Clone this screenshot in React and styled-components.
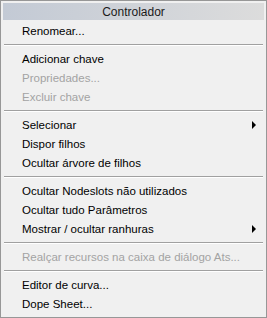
import React from "react";
import styled, { createGlobalStyle } from "styled-components";

const Global = createGlobalStyle`
  html, body { margin: 0; padding: 0; background: #f0f0f0; }
  body { font-family: "Liberation Sans", Arial, sans-serif; }
`;

const Menu = styled.div`
  box-sizing: border-box;
  width: 267px;
  height: 318px;
  border: 1px solid #979797;
  background: #f0f0f0;
  padding: 2px 2px 4px 2px;
  display: flex;
  flex-direction: column;
  font-size: 11.5px;
`;

const Header = styled.div`
  height: 17px;
  margin-bottom: 1px;
  background: linear-gradient(to right, #c3cad5, #dcdcdc);
  color: #1a1a1a;
  display: flex;
  align-items: center;
  justify-content: center;
  font-size: 12px;
`;

const Item = styled.div`
  height: 19px;
  display: flex;
  align-items: center;
  justify-content: space-between;
  padding: 1px 8px 0 19px;
  box-sizing: border-box;
  color: ${(p) => (p.$disabled ? "#a3a3a3" : "#000")};
  white-space: nowrap;
`;

const Separator = styled.div`
  height: 9px;
  display: flex;
  flex-direction: column;
  padding: 4px 1px 0 1px;
  box-sizing: border-box;
  &::before {
    content: "";
    height: 1px;
    background: #a0a0a0;
  }
  &::after {
    content: "";
    height: 1px;
    background: #ffffff;
  }
`;

const Arrow = styled.span`
  width: 0;
  height: 0;
  border-top: 4px solid transparent;
  border-bottom: 4px solid transparent;
  border-left: 4px solid #000;
`;

const rows = [
  ["Renomear..."],
  "sep",
  ["Adicionar chave"],
  ["Propriedades...", true],
  ["Excluir chave", true],
  "sep",
  ["Selecionar", false, true],
  ["Dispor filhos"],
  ["Ocultar árvore de filhos"],
  "sep",
  ["Ocultar Nodeslots não utilizados"],
  ["Ocultar tudo Parâmetros"],
  ["Mostrar / ocultar ranhuras", false, true],
  "sep",
  ["Realçar recursos na caixa de diálogo Ats...", true],
  "sep",
  ["Editor de curva..."],
  ["Dope Sheet..."],
];

export default function App() {
  return (
    <>
      <Global />
      <Menu>
        <Header>Controlador</Header>
        {rows.map((r, i) =>
          r === "sep" ? (
            <Separator key={i} />
          ) : (
            <Item key={i} $disabled={r[1]}>
              <span>{r[0]}</span>
              {r[2] && <Arrow />}
            </Item>
          )
        )}
      </Menu>
    </>
  );
}
